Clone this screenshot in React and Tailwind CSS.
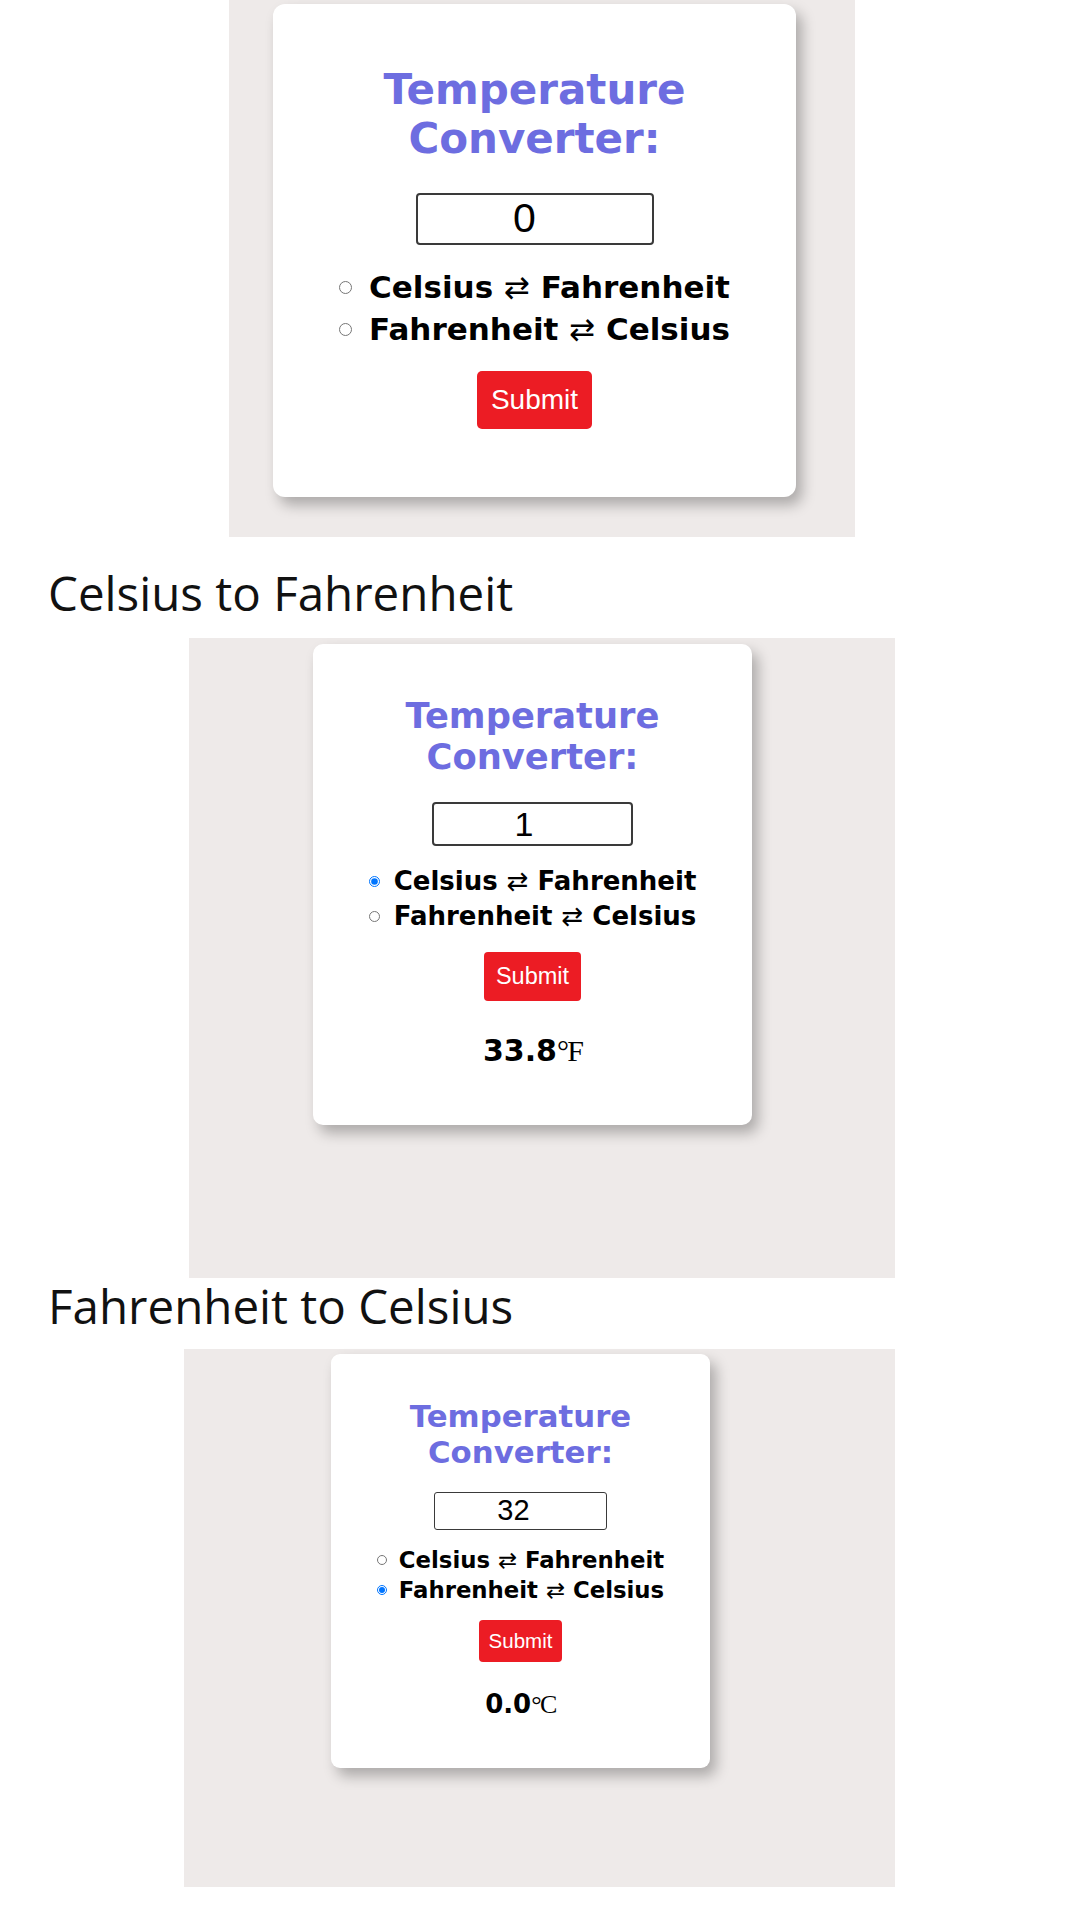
import { useState } from 'react';

const verdana = { fontFamily: '"DejaVu Sans", Verdana, sans-serif' };

// one set of sizes per screenshot (the card is the same design, just scaled)
const sizes = {
  lg: {
    card: 'w-[523px] rounded-[12px] pt-[61px] pb-[68px]',
    title: 'text-[42px] leading-[49px]',
    input: 'mt-[30px] w-[238px] h-[52px] text-[41px] pr-[20px] border-2 rounded-[4px]',
    rows: 'mt-[21px] text-[31px] leading-[42px]',
    radio: 'w-[13px] h-[13px] mr-[17px]',
    submit: 'mt-[21px] h-[58px] px-[14px] text-[28px] rounded-[5px]',
    result: 'mt-[39px] text-[35px] leading-[40px]',
  },
  md: {
    card: 'w-[439px] rounded-[10px] pt-[51px] pb-[57px]',
    title: 'text-[35.3px] leading-[41px]',
    input: 'mt-[25px] w-[201px] h-[44px] text-[34px] pr-[17px] border-2 rounded-[4px]',
    rows: 'mt-[18px] text-[26px] leading-[35px]',
    radio: 'w-[11px] h-[11px] mr-[14px]',
    submit: 'mt-[18px] h-[49px] px-[12px] text-[23.5px] rounded-[4px]',
    result: 'mt-[33px] text-[30px] leading-[34px]',
  },
  sm: {
    card: 'w-[379px] rounded-[9px] pt-[44px] pb-[49px]',
    title: 'text-[30.8px] leading-[36px]',
    input: 'mt-[22px] w-[173px] h-[38px] text-[29px] pr-[14px] border-[1.5px] rounded-[3px]',
    rows: 'mt-[15px] text-[22.8px] leading-[30px]',
    radio: 'w-[10px] h-[10px] mr-[12px]',
    submit: 'mt-[15px] h-[42px] px-[10px] text-[20.5px] rounded-[4px]',
    result: 'mt-[28px] text-[26px] leading-[29px]',
  },
};

function Converter({ size, value, mode, result, unit }) {
  const s = sizes[size];
  const [val, setVal] = useState(value);
  const [m, setM] = useState(mode);

  return (
    <div className={`bg-white flex flex-col items-center shadow-[6px_8px_14px_rgba(0,0,0,0.28)] ${s.card}`}>
      <h1 className={`font-bold text-center text-[#6d6de0] ${s.title}`} style={verdana}>
        Temperature
        <br />
        Converter:
      </h1>

      <input
        type="text"
        value={val}
        onChange={e => setVal(e.target.value)}
        className={`bg-white border-[#3a3a3a] text-center text-black outline-none ${s.input}`}
        style={{ fontFamily: '"Liberation Sans", Arial, sans-serif' }}
      />

      <div className={`w-fit font-bold text-black ${s.rows}`} style={verdana}>
        <label className="flex items-center">
          <input type="radio" checked={m === 'c'} onChange={() => setM('c')} className={`m-0 accent-[#0075ff] ${s.radio}`} />
          <span>Celsius <span className="font-normal">⇄</span> Fahrenheit</span>
        </label>
        <label className="flex items-center">
          <input type="radio" checked={m === 'f'} onChange={() => setM('f')} className={`m-0 accent-[#0075ff] ${s.radio}`} />
          <span>Fahrenheit <span className="font-normal">⇄</span> Celsius</span>
        </label>
      </div>

      <button
        type="button"
        className={`bg-[#ec1c24] text-white leading-none ${s.submit}`}
        style={{ fontFamily: '"Liberation Sans", Arial, sans-serif' }}
      >
        Submit
      </button>

      {result && (
        <div className={`font-bold text-black ${s.result}`} style={verdana}>
          {result}
          <span className="font-normal tracking-[-0.06em]" style={{ fontFamily: '"Liberation Serif", "Times New Roman", serif' }}>
            °{unit}
          </span>
        </div>
      )}
    </div>
  );
}

export default function App() {
  return (
    <div className="w-[1080px] min-h-[1920px] bg-white flex flex-col">
      {/* first shot: empty form */}
      <div className="ml-[229px] w-[626px] h-[537px] bg-[#eeeae9] pt-[4px] pl-[44px]">
        <Converter size="lg" value="0" mode="" />
      </div>

      <h2 className="ml-[48px] mt-[28px] text-[47.5px] leading-[55px] text-[#111]" style={{ fontFamily: '"Open Sans", sans-serif' }}>
        Celsius to Fahrenheit
      </h2>

      <div className="ml-[189px] mt-[18px] w-[706px] h-[640px] bg-[#eeeae9] pt-[6px] pl-[124px]">
        <Converter size="md" value="1" mode="c" result="33.8" unit="F" />
      </div>

      <h2 className="ml-[48px] mt-[0px] text-[47.5px] leading-[55px] text-[#111]" style={{ fontFamily: '"Open Sans", sans-serif' }}>
        Fahrenheit to Celsius
      </h2>

      <div className="ml-[184px] mt-[16px] w-[711px] h-[538px] bg-[#eeeae9] pt-[5px] pl-[147px]">
        <Converter size="sm" value="32" mode="f" result="0.0" unit="C" />
      </div>
    </div>
  );
}
